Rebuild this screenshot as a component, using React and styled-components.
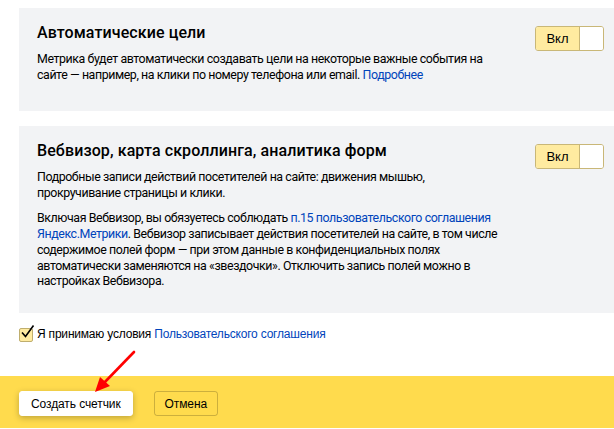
import React from 'react';
import styled, { createGlobalStyle } from 'styled-components';

const GlobalStyle = createGlobalStyle`
  html, body {
    margin: 0;
    padding: 0;
    background: #fff;
    overflow: hidden;
  }
  body {
    font-family: Roboto, 'Noto Sans', sans-serif;
    color: #000;
  }
`;

const Page = styled.div`
  position: relative;
  width: 614px;
  height: 429px;
  overflow: hidden;
`;

const Content = styled.div`
  display: flex;
  flex-direction: column;
  gap: 15px;
  padding: 8px 0 0 19px;
`;

const Panel = styled.section`
  display: flex;
  align-items: flex-start;
  justify-content: space-between;
  background: #f2f3f5;
  padding: 15px 10px 0 18px;
  height: ${(p) => p.$height}px;
  box-sizing: border-box;
`;

const PanelBody = styled.div`
  width: 470px;
`;

const Title = styled.h2`
  margin: 0 0 8px;
  font-size: 16px;
  line-height: 20px;
  font-weight: 500;
  letter-spacing: 0.1px;
`;

const Text = styled.p`
  margin: 0 0 10px;
  font-size: 12.4px;
  line-height: 15.7px;
  letter-spacing: -0.42px;
`;

const Link = styled.a`
  color: #0044bb;
  text-decoration: none;
`;

const Toggle = styled.div`
  display: flex;
  margin-top: ${(p) => p.$top}px;
  height: 25px;
  border: 1px solid #c9b777;
  border-radius: 3px;
  box-sizing: border-box;
  overflow: hidden;
  flex-shrink: 0;
`;

const ToggleLabel = styled.span`
  display: flex;
  align-items: center;
  justify-content: center;
  width: 43px;
  background: #ffeba0;
  border-right: 1px solid #c9b777;
  font-family: 'Liberation Sans', Arial, sans-serif;
  font-size: 13px;
  color: #000;
`;

const ToggleKnob = styled.span`
  width: 23px;
  background: #fff;
`;

const Agree = styled.label`
  display: flex;
  align-items: center;
  gap: 4px;
  margin-top: 12px;
  padding-left: 19px;
  font-family: 'Liberation Sans', Arial, sans-serif;
  font-size: 12px;
  letter-spacing: -0.2px;
`;

const Check = styled.span`
  position: relative;
  width: 12px;
  height: 12px;
  margin-top: 3px;
  border: 1px solid #bfae6e;
  border-radius: 2px;
  background: #ffeba0;

  svg {
    position: absolute;
    left: 0;
    top: -5px;
  }
`;

const Footer = styled.footer`
  display: flex;
  gap: 21px;
  margin-top: 34px;
  height: 52px;
  padding: 15px 0 0 19px;
  background: #ffdb4d;
  box-sizing: border-box;
`;

const Button = styled.button`
  height: 25px;
  padding: 0 ${(p) => (p.$primary ? 11 : 10)}px;
  border-radius: 3px;
  font-family: 'Liberation Sans', Arial, sans-serif;
  font-size: 12px;
  letter-spacing: -0.1px;
  color: #000;
  cursor: pointer;
  background: ${(p) => (p.$primary ? '#fff' : 'transparent')};
  border: 1px solid ${(p) => (p.$primary ? '#fff' : 'rgba(0,0,0,0.2)')};
  box-shadow: ${(p) => (p.$primary ? '0 2px 6px rgba(0,0,0,0.25)' : 'none')};
`;

const Arrow = styled.svg`
  position: absolute;
  left: 90px;
  top: 348px;
`;

const Switch = ({ top }) => (
  <Toggle $top={top}>
    <ToggleLabel>Вкл</ToggleLabel>
    <ToggleKnob />
  </Toggle>
);

export default function App() {
  return (
    <Page>
      <GlobalStyle />
      <Content>
        <Panel $height={103}>
          <PanelBody>
            <Title>Автоматические цели</Title>
            <Text>
              Метрика будет автоматически создавать цели на некоторые важные события на
              сайте — например, на клики по номеру телефона или email.{' '}
              <Link href="#">Подробнее</Link>
            </Text>
          </PanelBody>
          <Switch top={3} />
        </Panel>
        <Panel $height={187}>
          <PanelBody>
            <Title>Вебвизор, карта скроллинга, аналитика форм</Title>
            <Text>
              Подробные записи действий посетителей на сайте: движения мышью,
              прокручивание страницы и клики.
            </Text>
            <Text>
              Включая Вебвизор, вы обязуетесь соблюдать{' '}
              <Link href="#">п.15 пользовательского соглашения Яндекс.Метрики</Link>.
              Вебвизор записывает действия посетителей на сайте, в том числе
              содержимое полей форм — при этом данные в конфиденциальных полях
              автоматически заменяются на «звездочки». Отключить запись полей можно в
              настройках Вебвизора.
            </Text>
          </PanelBody>
          <Switch top={3} />
        </Panel>
      </Content>
      <Agree>
        <Check>
          <svg width="16" height="16" viewBox="0 0 16 16">
            <path d="M2 8.5 L5.5 12.5 L13.5 1.5" fill="none" stroke="#000" strokeWidth="1.6" />
          </svg>
        </Check>
        <span>
          Я принимаю условия <Link href="#">Пользовательского соглашения</Link>
        </span>
      </Agree>
      <Footer>
        <Button $primary>Создать счетчик</Button>
        <Button>Отмена</Button>
      </Footer>
      <Arrow width="50" height="48" viewBox="0 0 50 48">
        <line x1="44" y1="4" x2="12" y2="37" stroke="#f00" strokeWidth="2.6" strokeLinecap="round" />
        <polygon points="5,44 10,29 20,38" fill="#f00" />
      </Arrow>
    </Page>
  );
}
